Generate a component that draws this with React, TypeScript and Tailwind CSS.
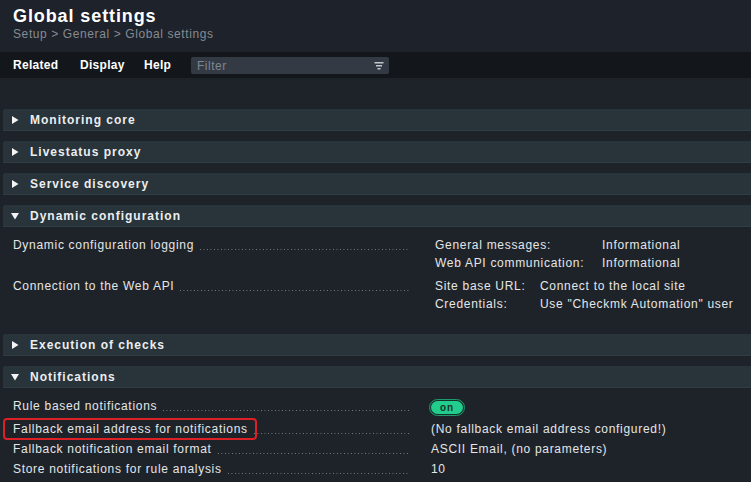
import React from 'react';

interface Section {
  title: string;
  open?: boolean;
}

const font = "font-['Liberation_Sans',Arial,sans-serif]";

const Triangle: React.FC<{ open?: boolean }> = ({ open }) => (
  <svg width="8" height="8" viewBox="0 0 8 8" className="shrink-0">
    {open ? <polygon points="0,1 8,1 4,7.5" fill="#f2f4f5" /> : <polygon points="1,0 7.5,4 1,8" fill="#f2f4f5" />}
  </svg>
);

const SectionHeader: React.FC<Section> = ({ title, open }) => (
  <div className="ml-[3px] h-[22px] flex items-center gap-[11px] pl-[8px] bg-[#28333a] border-b border-[#313c43] rounded-tl-[2px]">
    <Triangle open={open} />
    <span className="text-[12px] font-bold text-[#eceef0] tracking-[1px]">{title}</span>
  </div>
);

const Dots: React.FC = () => (
  <span className="flex-1 self-end mb-[4px] ml-[6px] h-px bg-[linear-gradient(to_right,#777d84_1px,transparent_1px)] bg-[length:3.5px_1px] bg-repeat-x" />
);

const Label: React.FC<{ text: string; highlight?: boolean }> = ({ text, highlight }) => (
  <div className="w-[397px] flex shrink-0">
    <span className="relative whitespace-nowrap">
      {text}
      {highlight && (
        <span className="absolute -left-[10px] -right-[9px] -top-[2px] -bottom-[2px] border-2 border-[#dd1f26] rounded-[4px]" />
      )}
    </span>
    <Dots />
  </div>
);

const FilterIcon: React.FC = () => (
  <svg width="10" height="10" viewBox="0 0 10 10">
    <rect x="0.5" y="1" width="9" height="1.5" fill="#c3c7cc" />
    <rect x="2" y="4" width="6" height="1.5" fill="#c3c7cc" />
    <rect x="3.5" y="7" width="3" height="1.5" fill="#c3c7cc" />
  </svg>
);

const App: React.FC = () => {
  return (
    <div className={`w-[751px] h-[482px] overflow-hidden bg-[#1e2329] text-[12px] text-[#e4e6e8] tracking-[0.7px] ${font}`}>
      {/* Title */}
      <div className="bg-[#1e222a] pl-[13px] pt-[5px] h-[52px]">
        <h1 className="text-[18px] leading-[22px] font-bold text-white tracking-[0.9px]">Global settings</h1>
        <div className="text-[12px] leading-[14px] text-[#858b93] tracking-[0.6px]">Setup &gt; General &gt; Global settings</div>
      </div>

      {/* Menu bar */}
      <div className="h-[26px] bg-[#13171b] flex items-center pl-[13px]">
        <span className="font-bold text-white tracking-[0.3px] w-[67px]">Related</span>
        <span className="font-bold text-white tracking-[0.3px] w-[64px]">Display</span>
        <span className="font-bold text-white tracking-[0.3px] w-[47px]">Help</span>
        <div className="w-[198px] h-[17px] mt-[1px] bg-[#333a44] rounded-[2px] flex items-center justify-between pl-[6px] pr-[5px]">
          <span className="text-[#7f868f] tracking-[0.5px]">Filter</span>
          <FilterIcon />
        </div>
      </div>

      <div className="pt-[31px] flex flex-col">
        <div className="flex flex-col gap-[10px]">
          <SectionHeader title="Monitoring core" />
          <SectionHeader title="Livestatus proxy" />
          <SectionHeader title="Service discovery" />
          <SectionHeader title="Dynamic configuration" open />
        </div>

        {/* Dynamic configuration body */}
        <div className="pt-[9px] pb-[10px] flex flex-col gap-[5px] leading-[18px]">
          <div className="flex pl-[13px]">
            <div className="flex h-[18px]"><Label text="Dynamic configuration logging" /></div>
            <div className="pl-[25px] grid grid-cols-[167px_auto]">
              <span>General messages:</span>
              <span>Informational</span>
              <span>Web API communication:</span>
              <span>Informational</span>
            </div>
          </div>
          <div className="flex pl-[13px]">
            <div className="flex h-[18px]"><Label text="Connection to the Web API" /></div>
            <div className="pl-[25px] grid grid-cols-[105px_auto]">
              <span>Site base URL:</span>
              <span>Connect to the local site</span>
              <span>Credentials:</span>
              <span>Use "Checkmk Automation" user</span>
            </div>
          </div>
        </div>

        <div className="mt-[11px] flex flex-col gap-[10px]">
          <SectionHeader title="Execution of checks" />
          <SectionHeader title="Notifications" open />
        </div>

        {/* Notifications body */}
        <div className="pt-[9px] flex flex-col leading-[18px]">
          <div className="flex items-start pl-[13px] h-[21px]">
            <div className="flex h-[18px]"><Label text="Rule based notifications" /></div>
            <div className="pl-[19px] pt-[2px]">
              <div className="w-[36px] h-[17px] rounded-full border border-[#1f9a6d] p-[1px] bg-[#15312a]">
                <div className="h-full rounded-full bg-[#22cc8c] flex items-center justify-center text-[10px] font-bold text-[#17362b] tracking-[1px] leading-none">on</div>
              </div>
            </div>
          </div>
          <div className="flex items-center pl-[13px] h-[21px]">
            <div className="flex h-[18px]"><Label text="Fallback email address for notifications" highlight /></div>
            <div className="pl-[21px]">(No fallback email address configured!)</div>
          </div>
          <div className="flex items-center pl-[13px] h-[20px]">
            <div className="flex h-[18px]"><Label text="Fallback notification email format" /></div>
            <div className="pl-[21px]">ASCII Email, (no parameters)</div>
          </div>
          <div className="flex items-center pl-[13px] h-[20px]">
            <div className="flex h-[18px]"><Label text="Store notifications for rule analysis" /></div>
            <div className="pl-[21px]">10</div>
          </div>
        </div>
      </div>
    </div>
  );
};

export default App;
